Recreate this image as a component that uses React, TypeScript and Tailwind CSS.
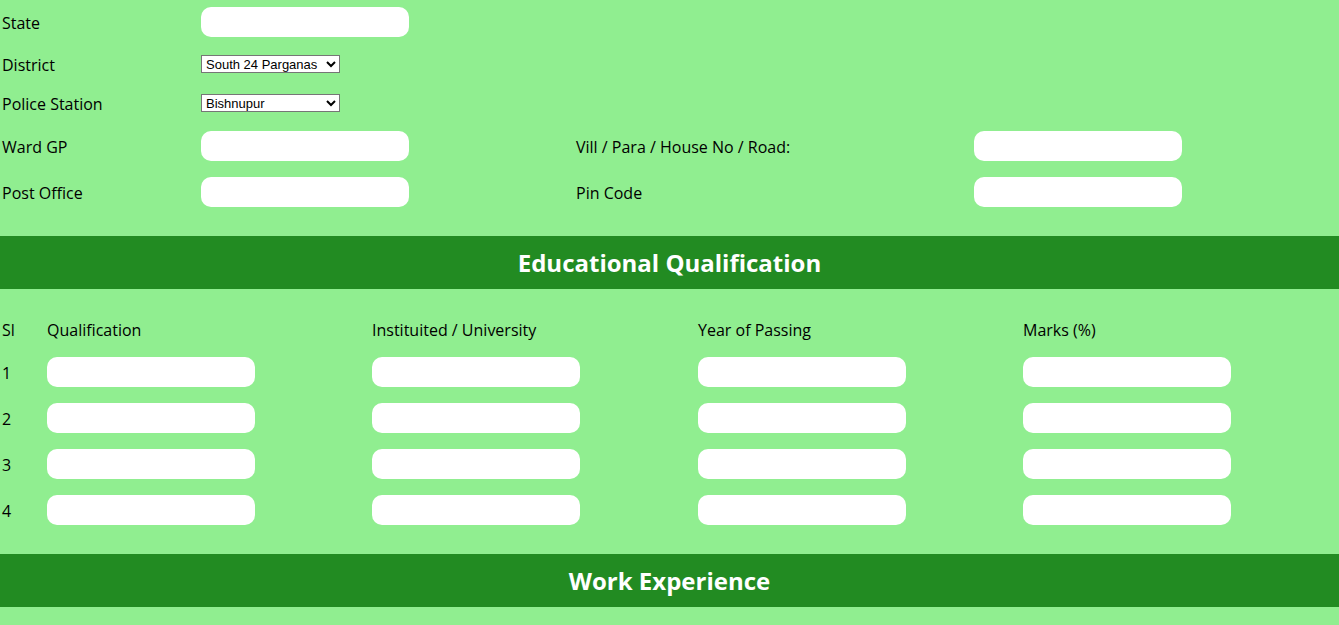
import React from "react";

const label = "px-[2px] pt-[1px] text-[16px] text-black";
const box = "h-[30px] w-[208px] rounded-[10px] bg-white outline-none";
const pick =
  "h-[18px] w-[139px] border border-[#767676] bg-white px-0 text-[13px] text-black font-['Liberation_Sans',Arial,sans-serif]";

function Field({ text, h }: { text: string; h: string }) {
  return <div className={`flex items-center ${h} ${label}`}>{text}</div>;
}

function Cell({ h, children }: { h: string; children: React.ReactNode }) {
  return <div className={`flex items-center ${h}`}>{children}</div>;
}

function Banner({ title }: { title: string }) {
  return (
    <div className="flex h-[53px] items-center justify-center bg-[#228b22] pt-[1px] text-[24px] font-bold text-white">
      {title}
    </div>
  );
}

export default function App() {
  const rows = ["1", "2", "3", "4"];
  return (
    <div className="min-h-[625px] w-full bg-[#90ee90] font-['Comic_Sans_MS','Open_Sans',cursive] text-black">
      {/* address block */}
      <div className="grid grid-cols-[201px_373px_400px_1fr]">
        <Field text="State" h="h-[44px]" />
        <Cell h="h-[44px]">
          <input className={box} />
        </Cell>
        <div />
        <div />

        <Field text="District" h="h-[40px]" />
        <Cell h="h-[40px]">
          <select className={pick} defaultValue="s24">
            <option value="s24">South 24 Parganas</option>
          </select>
        </Cell>
        <div />
        <div />

        <Field text="Police Station" h="h-[38px]" />
        <Cell h="h-[38px]">
          <select className={pick} defaultValue="bis">
            <option value="bis">Bishnupur</option>
          </select>
        </Cell>
        <div />
        <div />

        <Field text="Ward GP" h="h-[48px]" />
        <Cell h="h-[48px]">
          <input className={box} />
        </Cell>
        <Field text="Vill / Para / House No / Road:" h="h-[48px]" />
        <Cell h="h-[48px]">
          <input className={box} />
        </Cell>

        <Field text="Post Office" h="h-[44px]" />
        <Cell h="h-[44px]">
          <input className={box} />
        </Cell>
        <Field text="Pin Code" h="h-[44px]" />
        <Cell h="h-[44px]">
          <input className={box} />
        </Cell>
      </div>

      <div className="mt-[22px]">
        <Banner title="Educational Qualification" />
      </div>

      {/* qualification table */}
      <div className="grid grid-cols-[45px_325px_326px_325px_1fr] pt-[20px]">
        <Field text="Sl" h="h-[40px]" />
        <Field text="Qualification" h="h-[40px]" />
        <Field text="Instituited / University" h="h-[40px]" />
        <Field text="Year of Passing" h="h-[40px]" />
        <Field text="Marks (%)" h="h-[40px]" />
        {rows.map((n) => (
          <React.Fragment key={n}>
            <Field text={n} h="h-[46px]" />
            <Cell h="h-[46px]">
              <input className={`${box} ml-[2px]`} />
            </Cell>
            <Cell h="h-[46px]">
              <input className={`${box} ml-[2px]`} />
            </Cell>
            <Cell h="h-[46px]">
              <input className={`${box} ml-[2px]`} />
            </Cell>
            <Cell h="h-[46px]">
              <input className={`${box} ml-[2px]`} />
            </Cell>
          </React.Fragment>
        ))}
      </div>

      <div className="mt-[21px]">
        <Banner title="Work Experience" />
      </div>
      <div className="h-[40px]" />
    </div>
  );
}
